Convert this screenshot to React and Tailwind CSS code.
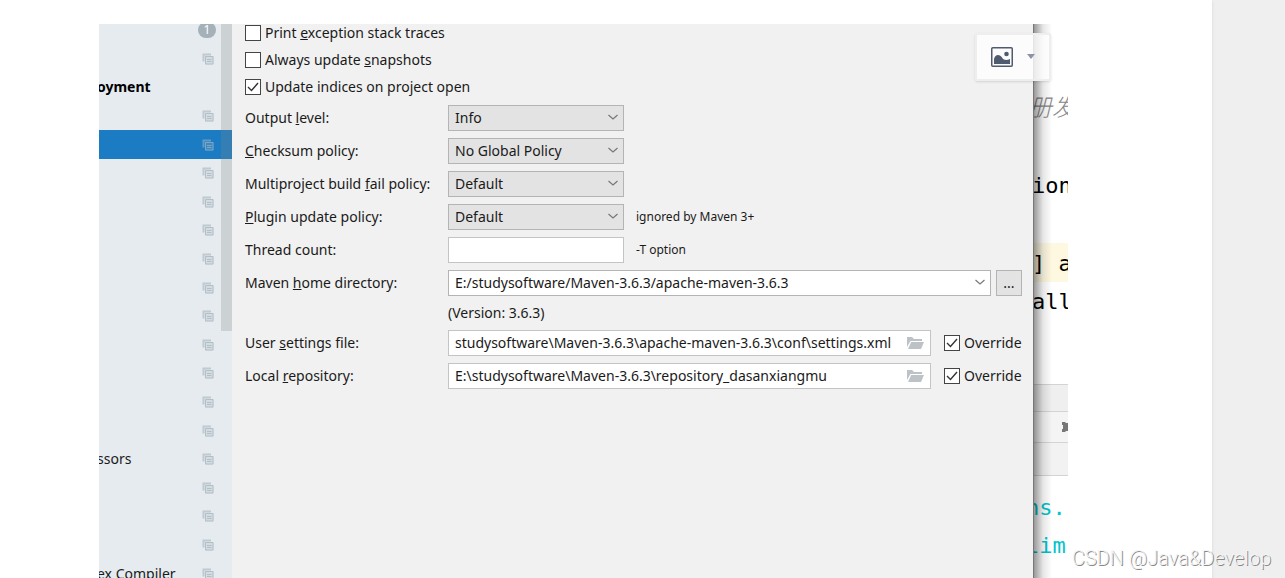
import { useState } from 'react';
import { clsx } from 'clsx';

// Visible slice of the settings tree, each row ends with a "project level" icon
const treeRows = [
  { badge: 1 },
  {},
  { label: 'oyment', bold: true, noIcon: true },
  {},
  { selected: true },
  {},
  {},
  {},
  {},
  {},
  {},
  {},
  {},
  {},
  {},
  { label: 'ssors' },
  {},
  {},
  {},
  { label: 'ex Compiler' },
];

const policies = [
  { id: 'output', label: <>Output <u>l</u>evel:</>, value: 'Info' },
  { id: 'checksum', label: <><u>C</u>hecksum policy:</>, value: 'No Global Policy' },
  { id: 'fail', label: <>Multiproject build <u>f</u>ail policy:</>, value: 'Default' },
  { id: 'plugin', label: <><u>P</u>lugin update policy:</>, value: 'Default', hint: 'ignored by Maven 3+' },
];

function CopyIcon({ className }) {
  return (
    <svg className={clsx('h-3 w-3 shrink-0', className)} viewBox="0 0 12 12" aria-hidden="true">
      <path d="M0.500 0.500h8.500v2H2.500v6h-2z" fill="currentColor" opacity="0.75" />
      <path d="M3 3h8.500v8.500H3z" fill="currentColor" opacity="0.35" />
      <path d="M3.500 3.500h7.500v7.500H3.500z" fill="none" stroke="currentColor" />
      <path d="M5 6.500h4.500M5 8.500h4.500" fill="none" stroke="currentColor" />
    </svg>
  );
}

function Chevron() {
  return (
    <svg className="pointer-events-none absolute right-1.5 top-2 h-2 w-2.5" viewBox="0 0 10 8" fill="none" stroke="#777" strokeWidth="1.2" aria-hidden="true">
      <path d="M0.500 2l4.500 4 4.500-4" />
    </svg>
  );
}

function FolderIcon() {
  return (
    <svg className="h-3 w-[17px]" viewBox="0 0 17 12" fill="#bcc2c6" aria-hidden="true">
      <path d="M0 10V0h5l2 2h8v2H3.500z" />
      <path d="M4.200 5H17l-3 7H1z" />
    </svg>
  );
}

function Check({ id, defaultChecked, children }) {
  const [checked, setChecked] = useState(Boolean(defaultChecked));
  return (
    <label htmlFor={id} className="flex items-center gap-1 whitespace-nowrap">
      <span className="relative h-4 w-4 shrink-0">
        <input
          id={id}
          type="checkbox"
          checked={checked}
          onChange={(e) => setChecked(e.target.checked)}
          className="block h-4 w-4 appearance-none border border-[#444] bg-white"
        />
        {checked && (
          <svg className="pointer-events-none absolute inset-0" viewBox="0 0 16 16" fill="none" stroke="#333" strokeWidth="1.4" aria-hidden="true">
            <path d="M3 8l3.500 3.500L13 4" />
          </svg>
        )}
      </span>
      <span>{children}</span>
    </label>
  );
}

function Select({ id, value, className }) {
  return (
    <div className={clsx('relative', className)}>
      <select id={id} defaultValue={value} className="block h-[26px] w-full appearance-none border border-[#b4b4b4] bg-inherit px-1.5">
        <option>{value}</option>
      </select>
      <Chevron />
    </div>
  );
}

function Row({ id, label, children }) {
  return (
    <div className="flex h-[26px] items-center">
      <label htmlFor={id} className="w-[203px] shrink-0 whitespace-nowrap">{label}</label>
      {children}
    </div>
  );
}

function PathRow({ id, label, value }) {
  return (
    <Row id={id} label={label}>
      <div className="flex h-[26px] min-w-0 flex-1 items-center border border-[#c4c4c4] bg-white pl-1.5 pr-1.5">
        <input id={id} type="text" defaultValue={value} className="min-w-0 flex-1 bg-transparent outline-none" />
        <button type="button" aria-label="Browse"><FolderIcon /></button>
      </div>
      <div className="ml-[13px] w-[78px]">
        <Check id={`${id}-override`} defaultChecked>Override</Check>
      </div>
    </Row>
  );
}

function Sidebar() {
  return (
    <nav className="relative w-[133px] shrink-0 overflow-hidden bg-[#e5ebef]">
      <ul className="-mt-2 flex h-[572px] flex-col">
        {treeRows.map((row, i) => (
          <li
            key={i}
            className={clsx('flex flex-1 items-center justify-end pr-[18px]', row.selected && 'bg-[#1b7cc4]')}
          >
            {row.label && (
              <span className={clsx('-ml-0.5 flex-1 whitespace-nowrap', row.bold && 'font-bold text-black')}>{row.label}</span>
            )}
            {row.badge && (
              <span className="-mr-0.5 flex h-4 w-[18px] items-center justify-center rounded-full bg-[#a5b1b9] text-xs text-white">{row.badge}</span>
            )}
            {!row.badge && !row.noIcon && <CopyIcon className={row.selected ? 'text-[#7fa6c2]' : 'text-[#b3bfc7]'} />}
          </li>
        ))}
      </ul>
      <div className="absolute right-0 top-0 h-[307px] w-[11px] bg-[#838383]/25" />
    </nav>
  );
}

function MavenSettings() {
  return (
    <form className="min-w-0 flex-1 border-r border-[#777] bg-[#f1f1f1] pl-[13px] pr-[11px]">
      <div className="-mt-px mb-2 flex flex-col gap-[7px] leading-5">
        <Check id="traces">Print <u>e</u>xception stack traces</Check>
        <Check id="snapshots">Always update <u>s</u>napshots</Check>
        <Check id="indices" defaultChecked>Update indices on project open</Check>
      </div>
      <div className="flex flex-col gap-[7px]">
        {policies.map((p) => (
          <Row key={p.id} id={p.id} label={p.label}>
            <Select id={p.id} value={p.value} className="w-44 bg-[#e3e3e3]" />
            {p.hint && <span className="ml-3 text-xs">{p.hint}</span>}
          </Row>
        ))}
        <Row id="threads" label="Thread count:">
          <input id="threads" type="text" className="h-[26px] w-44 border border-[#c4c4c4] bg-white px-1.5" />
          <span className="ml-3 text-xs">-T option</span>
        </Row>
        <Row id="home" label={<>Maven <u>h</u>ome directory:</>}>
          <Select id="home" value="E:/studysoftware/Maven-3.6.3/apache-maven-3.6.3" className="min-w-0 flex-1 bg-white" />
          <button type="button" className="ml-[5px] h-[26px] w-[26px] border border-[#b4b4b4] bg-[#e3e3e3]">...</button>
        </Row>
        <p className="ml-[203px] h-5 leading-5">(Version: 3.6.3)</p>
        <PathRow id="settings" label={<>User <u>s</u>ettings file:</>} value="studysoftware\Maven-3.6.3\apache-maven-3.6.3\conf\settings.xml" />
        <PathRow id="repository" label={<>Local <u>r</u>epository:</>} value="E:\studysoftware\Maven-3.6.3\repository_dasanxiangmu" />
      </div>
    </form>
  );
}

// The sliver of the editor and console left visible behind the dialog
function EditorEdge() {
  return (
    <div className="relative w-[34px] shrink-0 overflow-hidden whitespace-pre bg-white font-['DejaVu_Sans_Mono','Noto_Sans_CJK_SC',monospace] text-[22px] text-black">
      <p className="mt-[62px] h-10 -ml-1.5 font-['Noto_Sans_CJK_SC',sans-serif] text-2xl font-light italic leading-10 text-[#888]">册发</p>
      <p className="mt-[38px] h-11 -ml-0.5 leading-[44px]">ion</p>
      <p className="mt-[35px] h-[39px] bg-[#fff8e1] leading-[42px]"><span className="-ml-0.5">] a</span></p>
      <p className="h-10 -ml-0.5 leading-10">all</p>
      <div className="mt-[62px] h-7 border-y border-[#d4d4d4] bg-[#efefef]" />
      <div className="flex h-[31px] items-center justify-end overflow-hidden border-b border-[#d4d4d4] bg-[#f4f4f4]">
        <svg className="-mr-1.5 h-3 w-3 shrink-0" viewBox="0 0 12 12" fill="#777" aria-hidden="true">
          <path d="M0 1h3l1 1h4l1-1h3v3l-1 1v2l1 1v3H9L8 10H4l-1 1H0V8h1V4H0z" />
        </svg>
      </div>
      <div className="h-[33px] border-b border-[#d4d4d4] bg-[#f2f2f2]" />
      <p className="mt-3 h-[38px] -ml-2 leading-10 text-[#00c4cc]">ns.</p>
      <p className="h-[38px] -ml-2 leading-10 text-[#00c4cc]">lim</p>
      <div className="absolute inset-y-0 left-0 w-[18px] bg-linear-to-r from-black/40 via-black/10 to-transparent" />
    </div>
  );
}

export default function App() {
  return (
    <div className="relative flex h-screen overflow-hidden bg-[#efefef] font-['Noto_Sans',sans-serif] text-sm text-[#1a1a1a]">
      <main className="flex min-w-0 flex-1 bg-white pl-[99px] pr-36 pt-6 shadow-sm">
        <div className="relative flex min-w-0 flex-1">
          <Sidebar />
          <MavenSettings />
          <EditorEdge />
          <button
            type="button"
            aria-label="Image options"
            className="absolute right-[17px] top-[9px] flex h-12 w-[76px] items-center gap-3.5 rounded-xs border-2 border-[#eee] bg-white/80 pl-3.5 shadow-sm"
          >
            <svg className="h-5 w-[22px]" viewBox="0 0 22 20" aria-hidden="true">
              <rect x="0.75" y="0.75" width="20.500" height="18.500" rx="1" fill="none" stroke="#4f5b6e" strokeWidth="1.500" />
              <path d="M3 17v-5c1-5 6-5 8-1.500 2 3 4.500 3 8 1.500v5z" fill="#4f5b6e" />
              <circle cx="15.500" cy="7" r="2.300" fill="#4f5b6e" />
            </svg>
            <svg className="h-1.5 w-2" viewBox="0 0 8 6" fill="#8d93a5" aria-hidden="true">
              <path d="M0 0h8L4 5z" />
            </svg>
          </button>
        </div>
      </main>
      <aside className="w-[73px] shrink-0" />
      <p className="absolute bottom-1.5 right-3.5 font-['Roboto',sans-serif] text-xl font-light leading-7 text-[#f4f4f4] [text-shadow:1px_1px_0_#888]">
        CSDN @Java&amp;Develop
      </p>
    </div>
  );
}
